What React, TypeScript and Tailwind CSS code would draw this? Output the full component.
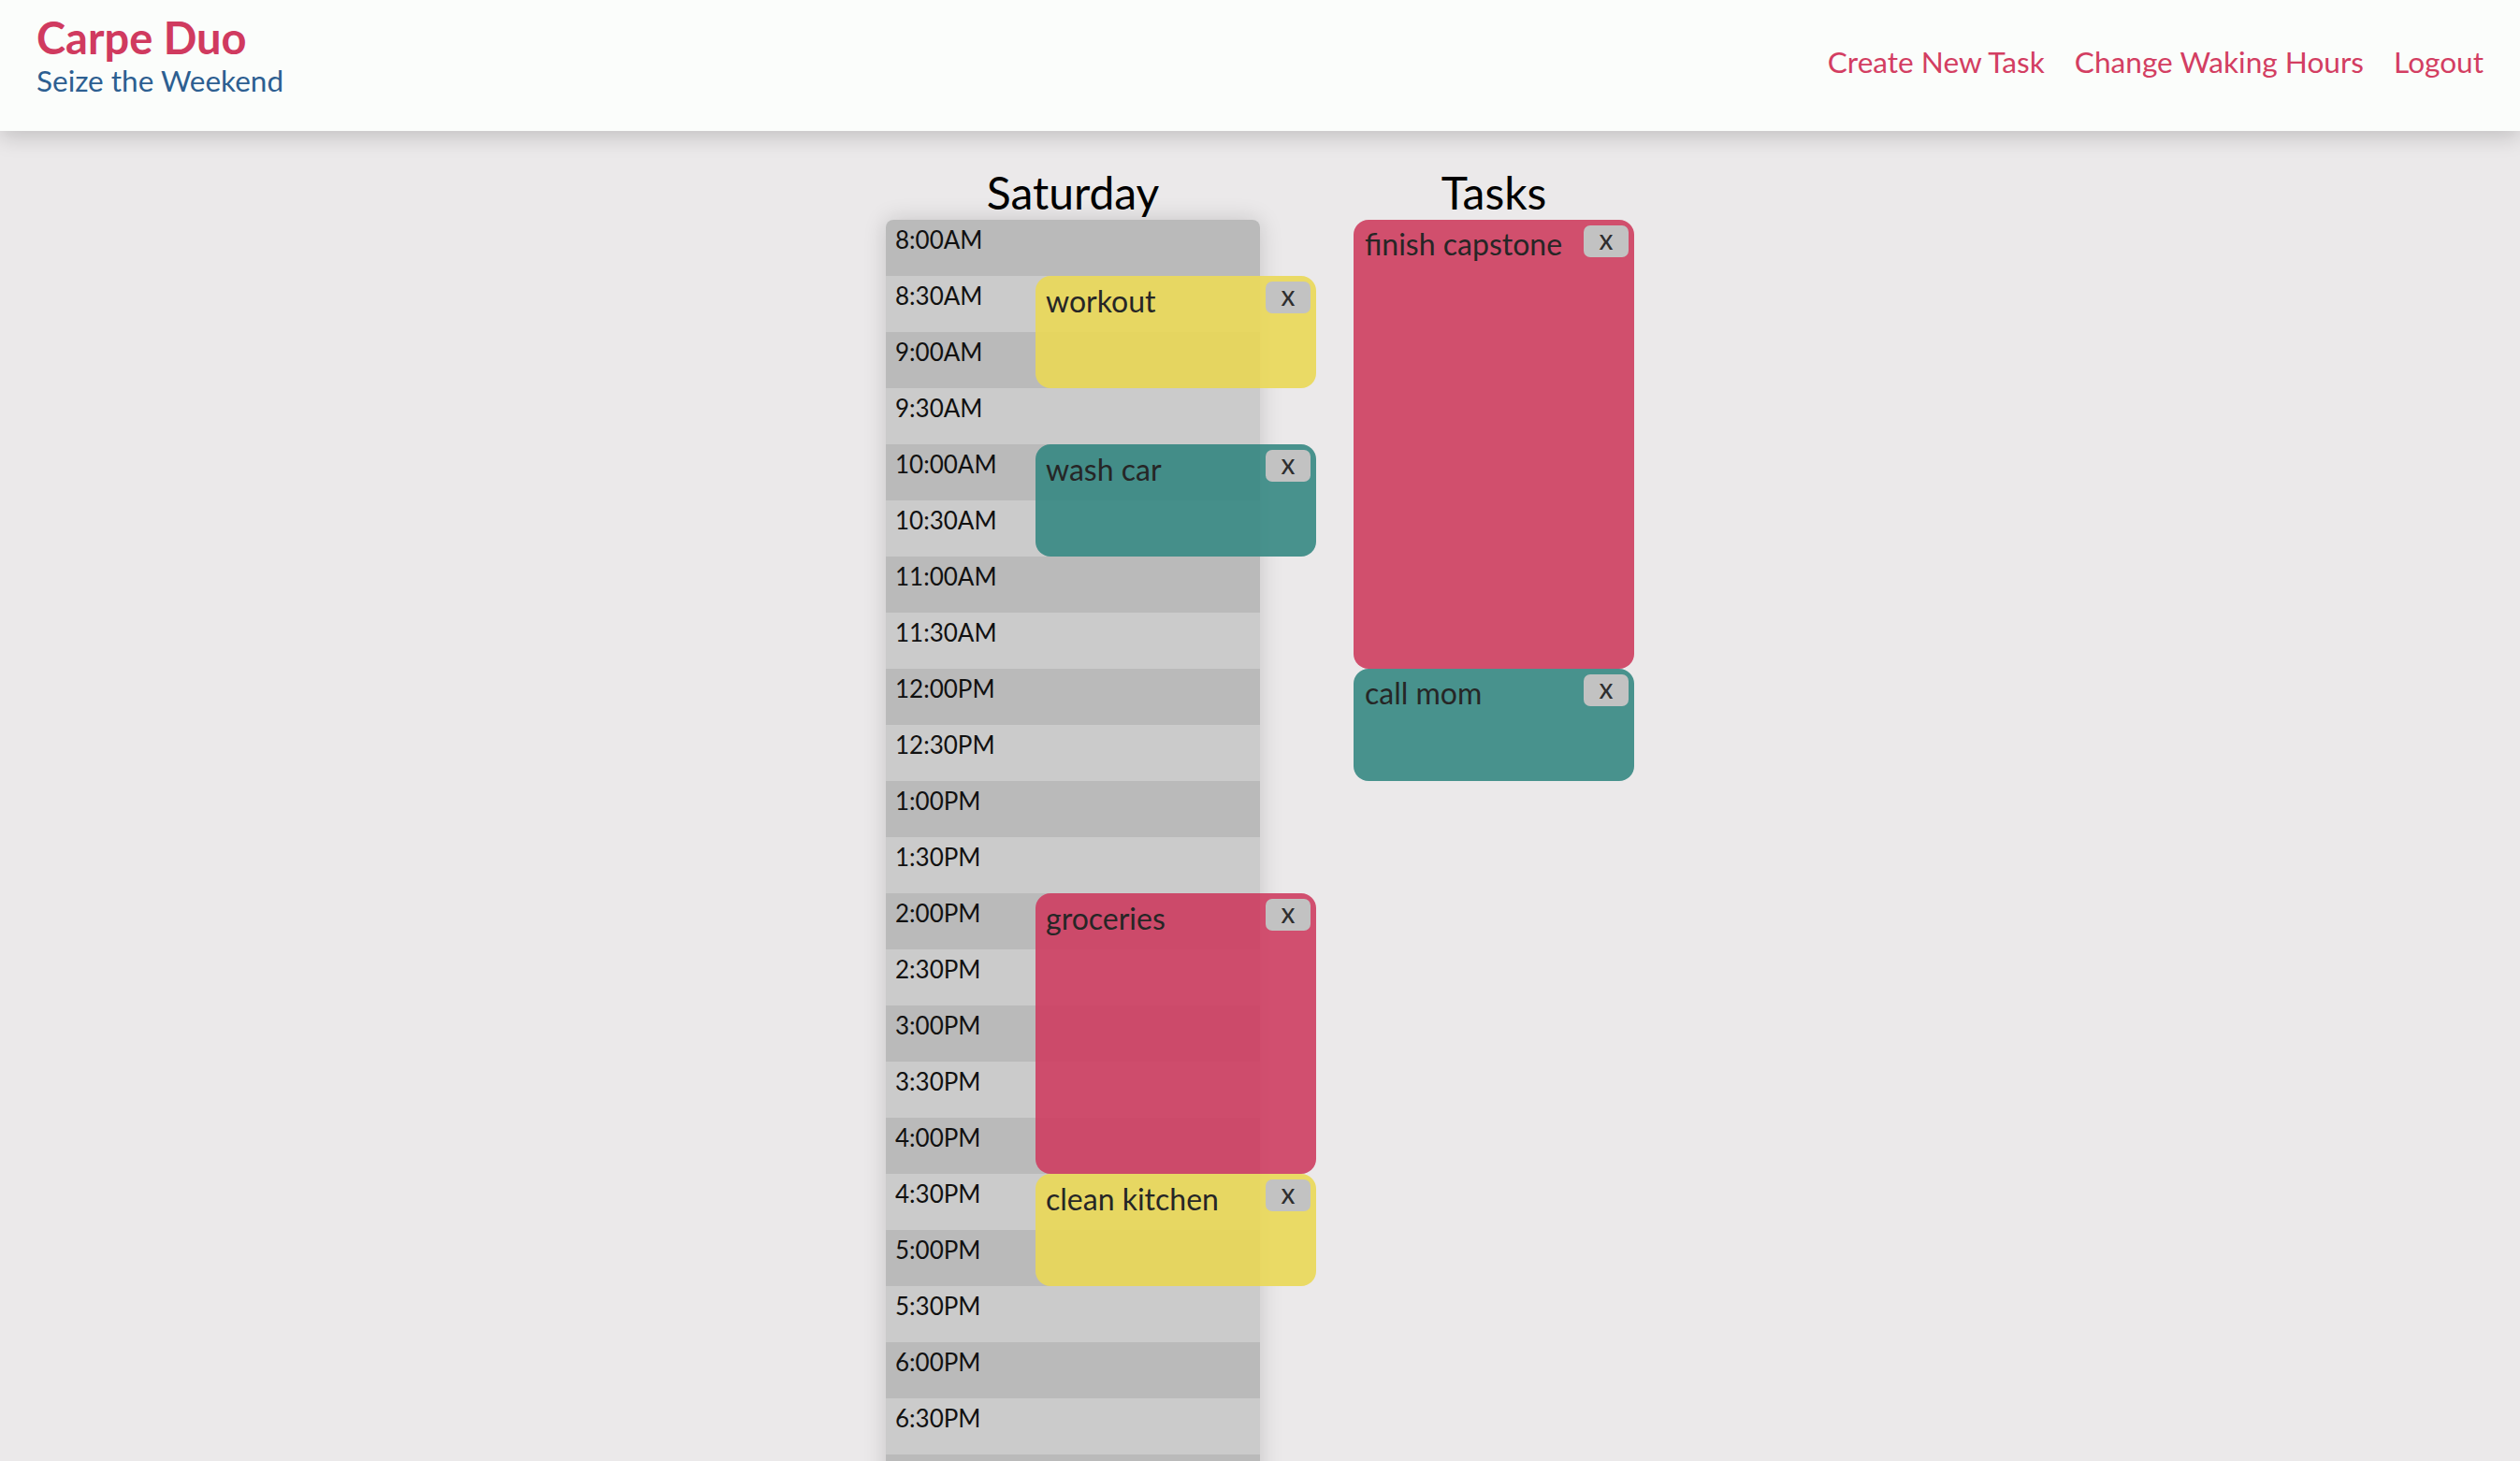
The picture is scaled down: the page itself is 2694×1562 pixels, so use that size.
import React from "react";

const times: string[] = (() => {
  const out: string[] = [];
  for (let h = 8; h <= 20; h++) {
    for (const m of ["00", "30"]) {
      const hr = h > 12 ? h - 12 : h;
      const suffix = h >= 12 ? "PM" : "AM";
      out.push(`${hr}:${m}${suffix}`);
    }
  }
  return out;
})();

type Ev = { title: string; start: number; rows: number; color: string };

const events: Ev[] = [
  { title: "workout", start: 1, rows: 2, color: "bg-[#ead857]/90" },
  { title: "wash car", start: 4, rows: 2, color: "bg-[#368883]/90" },
  { title: "groceries", start: 12, rows: 5, color: "bg-[#ce3e62]/90" },
  { title: "clean kitchen", start: 17, rows: 2, color: "bg-[#ead857]/90" },
];

const ROW = 60;

function XButton() {
  return (
    <button className="absolute top-[6px] right-[6px] w-[48px] h-[34px] rounded-[7px] bg-[#c2c2c2] text-[#2e2e2e] text-[30px] leading-none flex items-center justify-center pb-[5px]">
      x
    </button>
  );
}

export default function App() {
  return (
    <div
      className="min-h-screen bg-[#ebe9ea] text-black"
      style={{ fontFamily: "Lato, 'Open Sans', sans-serif" }}
    >
      <header className="relative z-10 h-[140px] bg-[#fbfdfb] flex justify-between px-[39px] shadow-[0_6px_22px_rgba(0,0,0,0.18)]">
        <div className="pt-[12px]">
          <h1 className="text-[47px] leading-[1.2] font-bold text-[#d03a5f]">Carpe Duo</h1>
          <p className="text-[31.5px] leading-[1.2] text-[#2d5f91]">Seize the Weekend</p>
        </div>
        <nav className="flex gap-[32px] pt-[48px] text-[31.6px] leading-[1.2] text-[#d33e62]">
          <a>Create New Task</a>
          <a>Change Waking Hours</a>
          <a>Logout</a>
        </nav>
      </header>

      <main className="flex justify-center pt-[37px]">
        <section className="w-[400px]">
          <h2 className="text-center text-[48px] leading-[1.2]">Saturday</h2>
          <div className="relative rounded-t-[8px] shadow-[0_0_24px_rgba(0,0,0,0.16)]">
            {times.map((t, i) => (
              <div
                key={t}
                className={`h-[60px] pl-[10px] pt-[6px] text-[26px] leading-[1.2] text-[#111] ${
                  i % 2 === 0 ? "bg-[#bababa]" : "bg-[#cbcbcb]"
                } ${i === 0 ? "rounded-t-[8px]" : ""}`}
              >
                {t}
              </div>
            ))}
            {events.map((e) => (
              <div
                key={e.title}
                className={`absolute left-[160px] w-[300px] rounded-[16px] ${e.color} pl-[11px] pt-[8px]`}
                style={{ top: e.start * ROW, height: e.rows * ROW }}
              >
                <span className="text-[32px] leading-[1.2] text-[#262626]">{e.title}</span>
                <XButton />
              </div>
            ))}
          </div>
        </section>

        <section className="w-[300px] ml-[100px]">
          <h2 className="text-center text-[48px] leading-[1.2]">Tasks</h2>
          <div className="flex flex-col">
            <div className="relative h-[480px] rounded-[16px] bg-[#d14f6d] pl-[12px] pt-[7px]">
              <span className="text-[32px] leading-[1.2] text-[#262626]">finish capstone</span>
              <XButton />
            </div>
            <div className="relative h-[120px] rounded-[16px] bg-[#48928d] pl-[12px] pt-[7px]">
              <span className="text-[32px] leading-[1.2] text-[#262626]">call mom</span>
              <XButton />
            </div>
          </div>
        </section>
      </main>
    </div>
  );
}
